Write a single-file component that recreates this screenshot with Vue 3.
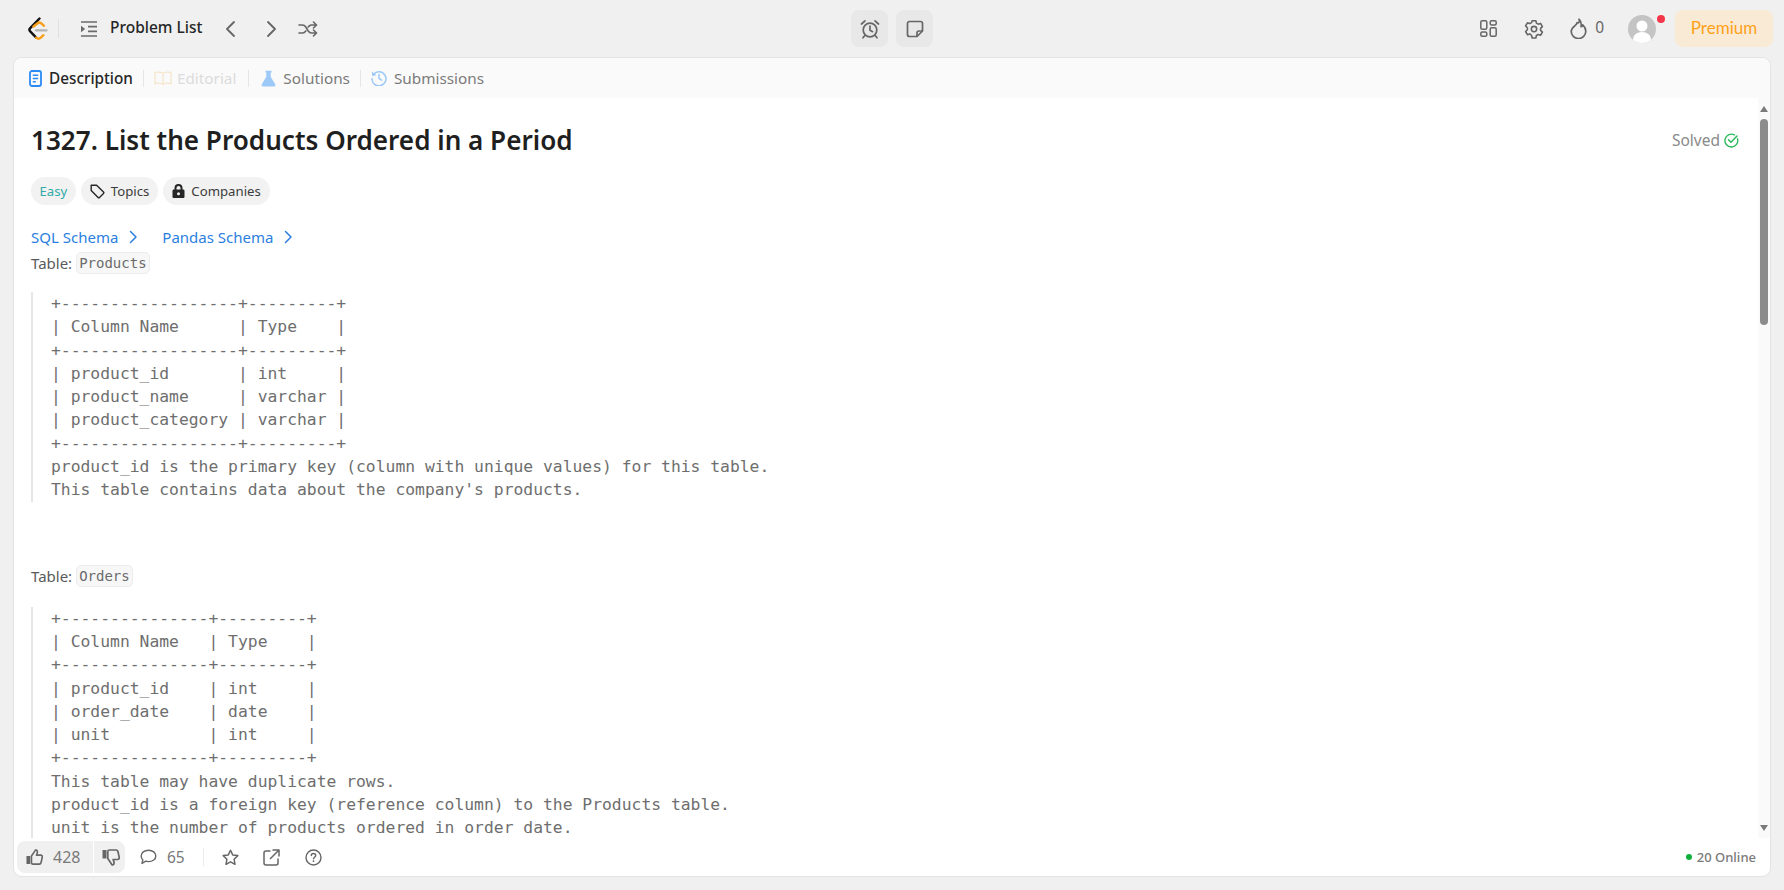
<script setup>
const table1 = `+------------------+---------+
| Column Name      | Type    |
+------------------+---------+
| product_id       | int     |
| product_name     | varchar |
| product_category | varchar |
+------------------+---------+
product_id is the primary key (column with unique values) for this table.
This table contains data about the company's products.`
const table2 = `+---------------+---------+
| Column Name   | Type    |
+---------------+---------+
| product_id    | int     |
| order_date    | date    |
| unit          | int     |
+---------------+---------+
This table may have duplicate rows.
product_id is a foreign key (reference column) to the Products table.
unit is the number of products ordered in order date.`
</script>

<template>
  <div class="page">
    <header class="topbar">
      <div class="side left">
        <svg class="logo" width="20" height="24" viewBox="0 0 20 24" fill="none">
          <path d="M11.5 1.5 2.2 11.2c-1 1-1 2.2 0 3.2l6 6.2" stroke="#111" stroke-width="2.4" stroke-linecap="round"/>
          <path d="M5.5 9.5 9.6 6.2c1-.8 2.4-.8 3.4 0l3 2.6" stroke="#f89f1b" stroke-width="2.4" stroke-linecap="round"/>
          <path d="M8.2 20.6c1.4 1.3 3.2 1.3 4.6 0l2.6-2.4" stroke="#f89f1b" stroke-width="2.4" stroke-linecap="round"/>
          <path d="M8 13.4h10.5" stroke="#b3b3b3" stroke-width="2.2" stroke-linecap="round"/>
        </svg>
        <span class="vsep"></span>
        <svg class="list-ic" width="18" height="16" viewBox="0 0 18 16" fill="none">
          <path d="M1 1h16M8 5.7h9M8 10.3h9M1 15h16" stroke="#6b6b6b" stroke-width="1.7"/>
          <path d="M1 4.8 5.2 8 1 11.2z" fill="#6b6b6b"/>
        </svg>
        <span class="plist">Problem List</span>
        <svg class="nav a" width="12" height="18" viewBox="0 0 12 18" fill="none"><path d="M10 2 3 9l7 7" stroke="#666" stroke-width="1.8" stroke-linecap="round" stroke-linejoin="round"/></svg>
        <svg class="nav b" width="12" height="18" viewBox="0 0 12 18" fill="none"><path d="m2 2 7 7-7 7" stroke="#666" stroke-width="1.8" stroke-linecap="round" stroke-linejoin="round"/></svg>
        <svg class="nav c" width="20" height="16" viewBox="0 0 20 16" fill="none"><path d="M1 4h3.500c1.500 0 2.500.8 3.300 2l2.400 4c.8 1.200 1.800 2 3.300 2H18M1 12h3.500c1.500 0 2.500-.8 3.300-2M10.200 6c.8-1.200 1.800-2 3.300-2H18M15.500 1 18.500 4l-3 3M15.500 9l3 3-3 3" stroke="#666" stroke-width="1.600" stroke-linecap="round" stroke-linejoin="round"/></svg>
      </div>
      <div class="center">
        <button class="sq">
          <svg width="20" height="20" viewBox="0 0 20 20" fill="none"><circle cx="10" cy="11" r="6.800" stroke="#666" stroke-width="1.700"/><path d="M10 7v4.200l2.600 1.500M1.500 5 5 1.800M18.500 5 15 1.800M4.800 16.500 3 18.800M15.200 16.500l1.800 2.300" stroke="#666" stroke-width="1.700" stroke-linecap="round"/></svg>
        </button>
        <button class="sq">
          <svg width="18" height="18" viewBox="0 0 18 18" fill="none"><path d="M3.500 1.500h11a2 2 0 0 1 2 2V11l-5.500 5.500H3.500a2 2 0 0 1-2-2v-11a2 2 0 0 1 2-2z" stroke="#666" stroke-width="1.700" stroke-linejoin="round"/><path d="M16.500 11H13a2 2 0 0 0-2 2v3.500" stroke="#666" stroke-width="1.700"/></svg>
        </button>
      </div>
      <div class="side right">
        <svg class="grid-ic" width="17" height="17" viewBox="0 0 17 17" fill="none" stroke="#666" stroke-width="1.500"><rect x=".8" y=".8" width="6" height="8.400" rx="1.500"/><rect x=".8" y="12" width="6" height="4.200" rx="1.500"/><rect x="10.200" y=".8" width="6" height="4.200" rx="1.500"/><rect x="10.200" y="7.800" width="6" height="8.400" rx="1.500"/></svg>
        <svg class="gear" width="20" height="20" viewBox="0 0 24 24" fill="none" stroke="#666" stroke-width="1.900" stroke-linejoin="round"><circle cx="12" cy="12" r="3.200"/><path d="M9.800 2h4.400l.7 3 2.100 1.200 2.900-.9 2.200 3.800-2.200 2.100v2.400l2.200 2.100-2.200 3.800-2.900-.9-2.100 1.200-.7 3H9.800l-.7-3L7 17.900l-2.900.9-2.200-3.800 2.200-2.100v-2.400L1.900 8.400l2.200-3.800 2.900.9 2.100-1.200z"/></svg>
        <svg class="flame" width="17" height="21" viewBox="0 0 17 21" fill="none"><path d="M9 1.200c1 2.800-.3 4.300-2 3.500C7.500 7 1.200 9 1.200 13.200a7.300 7.300 0 0 0 14.600 0c0-3.400-1.800-5.200-3-6.400-.3 1.400-1 1.900-1.700 1.900C11.500 6 11 3 9 1.200z" stroke="#666" stroke-width="1.700" stroke-linejoin="round"/></svg>
        <span class="zero">0</span>
        <span class="avatar">
          <svg width="28" height="28" viewBox="0 0 28 28"><defs><clipPath id="avclip"><circle cx="14" cy="14" r="14"/></clipPath></defs><circle cx="14" cy="14" r="14" fill="#c4c4c4"/><g clip-path="url(#avclip)"><circle cx="14" cy="11" r="5.500" fill="#fff"/><ellipse cx="14" cy="24" rx="9" ry="7" fill="#fff"/></g></svg>
          <i class="dot"></i>
        </span>
        <button class="premium">Premium</button>
      </div>
    </header>

    <main class="panel">
      <nav class="tabs">
        <span class="tab active">
          <svg width="13" height="17" viewBox="0 0 13 17" fill="none"><rect x="1" y="1" width="11" height="15" rx="2" stroke="#2a8af6" stroke-width="1.800"/><path d="M3.800 5.200h5.400M3.800 8.500h5.400M3.800 11.800h3" stroke="#2a8af6" stroke-width="1.400"/></svg>
          Description
        </span>
        <i class="tsep"></i>
        <span class="tab disabled">
          <svg width="18" height="14" viewBox="0 0 18 14" fill="none"><path d="M9 2.500C7.500 1 4 1 1 1.500v11c3-.5 6.500-.5 8 1 1.500-1.500 5-1.500 8-1v-11C14 1 10.500 1 9 2.500zM9 2.500v11" stroke="#f5e6cd" stroke-width="1.300"/></svg>
          Editorial
        </span>
        <i class="tsep wide"></i>
        <span class="tab">
          <svg width="15" height="17" viewBox="0 0 15 17"><path d="M4.500.8h6v1.700H9.700v4.300l4.500 7.400c.6 1.100 0 2.200-1.300 2.200H2.100C.8 16.400.2 15.300.8 14.200l4.500-7.400V2.500h-.8z" fill="#9cc9f7"/></svg>
          Solutions
        </span>
        <i class="tsep"></i>
        <span class="tab">
          <svg width="16" height="16" viewBox="0 0 16 16" fill="none"><path d="M2.500 4.500A7 7 0 1 1 1 8.500M8 4.500V8.500l2.600 1.600" stroke="#9cc9f7" stroke-width="1.500" stroke-linecap="round"/><path d="M.8 1.500 1.200 6l4.300-.8z" fill="#9cc9f7"/></svg>
          Submissions
        </span>
      </nav>

      <div class="body">
        <div class="content">
          <div class="title-row">
            <h1>1327. List the Products Ordered in a Period</h1>
            <span class="solved">Solved
              <svg width="15" height="15" viewBox="0 0 15 15" fill="none"><path d="M13.500 5.800A6.400 6.400 0 1 1 10.500 2" stroke="#2cbb5d" stroke-width="1.400" stroke-linecap="round"/><path d="m4.500 6.800 2.500 2.500 6-6.300" stroke="#2cbb5d" stroke-width="1.500" stroke-linecap="round" stroke-linejoin="round"/></svg>
            </span>
          </div>
          <div class="pills">
            <span class="pill easy">Easy</span>
            <span class="pill">
              <svg width="15" height="15" viewBox="0 0 15 15" fill="none"><path d="M1.200 1.200h5.400l6.900 6.900a1 1 0 0 1 0 1.400l-4 4a1 1 0 0 1-1.400 0L1.200 6.600z" stroke="#262626" stroke-width="1.400" stroke-linejoin="round"/></svg>
              Topics
            </span>
            <span class="pill">
              <svg width="13" height="14" viewBox="0 0 13 14"><path d="M2.500 5.500V4a4 4 0 0 1 8 0v1.500h.7c.7 0 1.300.6 1.300 1.300v5.900c0 .7-.6 1.300-1.300 1.300H1.800c-.7 0-1.300-.6-1.300-1.300V6.800c0-.7.600-1.300 1.300-1.300zm2 0h4V4a2 2 0 0 0-4 0z" fill="#262626"/><circle cx="6.500" cy="9.800" r="1.500" fill="#f2f2f2"/></svg>
              Companies
            </span>
          </div>
          <div class="links">
            <a>SQL Schema <svg width="9" height="14" viewBox="0 0 9 14" fill="none"><path d="m1.500 1.500 5.500 5.500-5.500 5.500" stroke="#2a7fe0" stroke-width="1.500" stroke-linecap="round" stroke-linejoin="round"/></svg></a>
            <a>Pandas Schema <svg width="9" height="14" viewBox="0 0 9 14" fill="none"><path d="m1.500 1.500 5.500 5.500-5.500 5.500" stroke="#2a7fe0" stroke-width="1.500" stroke-linecap="round" stroke-linejoin="round"/></svg></a>
          </div>
          <p class="para">Table: <code>Products</code></p>
          <pre class="block">{{ table1 }}</pre>
          <p class="para second">Table: <code>Orders</code></p>
          <pre class="block later">{{ table2 }}</pre>
        </div>
        <div class="scroll">
          <i class="arrow up"></i>
          <i class="thumb"></i>
          <i class="arrow down"></i>
        </div>
      </div>

      <footer class="bottom">
        <div class="votes">
          <span class="like">
            <svg width="17" height="18" viewBox="0 0 18 18" fill="none"><path d="M.5 8h4v8.500h-4z" fill="#666"/><path d="M5.800 8 9.500 2.500c.3-1.300 2.600-1.200 2.600 1 0 1.500-.6 2.500-1 3.500h4.400c1.300 0 2 1 1.700 2.200l-1.200 5.600c-.2 1-1 1.700-2 1.700H7.500c-1 0-1.700-.5-1.700-1.500z" stroke="#666" stroke-width="1.700" stroke-linejoin="round"/></svg>
            428
          </span>
          <span class="dislike">
            <svg width="18" height="18" viewBox="0 0 18 18" fill="none"><path d="M.5 2h4v8.500h-4z" fill="#666"/><path d="M5.800 10.500 9.500 16c.3 1.300 2.600 1.200 2.600-1 0-1.500-.6-2.500-1-3.500h4.400c1.300 0 2-1 1.700-2.200l-1.200-5.600c-.2-1-1-1.700-2-1.700H7.500c-1 0-1.700.5-1.700 1.500z" stroke="#666" stroke-width="1.700" stroke-linejoin="round"/></svg>
          </span>
        </div>
        <span class="comments">
          <svg width="17" height="16" viewBox="0 0 17 16" fill="none"><path d="M8.500 1.200c4.200 0 7.300 2.500 7.300 5.700s-3.100 5.700-7.300 5.700c-1 0-1.900-.1-2.700-.4L2 14.500l.8-3.500C1.800 9.900 1.200 8.500 1.200 6.900c0-3.200 3.100-5.700 7.300-5.700z" stroke="#666" stroke-width="1.400" stroke-linejoin="round"/></svg>
          65
        </span>
        <i class="bsep"></i>
        <svg class="b-ic star" width="17" height="17" viewBox="0 0 17 17" fill="none"><path d="m8.500 1.200 2.200 4.700 5.100.7-3.700 3.600.9 5.100-4.500-2.500L4 15.300l.9-5.100-3.700-3.600 5.100-.7z" stroke="#666" stroke-width="1.500" stroke-linejoin="round"/></svg>
        <svg class="b-ic share" width="17" height="17" viewBox="0 0 17 17" fill="none"><path d="M7 2H3a2 2 0 0 0-2 2v10a2 2 0 0 0 2 2h10a2 2 0 0 0 2-2v-4M10 1h6v6M16 1 7.500 9.500" stroke="#666" stroke-width="1.500" stroke-linecap="round" stroke-linejoin="round"/></svg>
        <svg class="b-ic help" width="17" height="17" viewBox="0 0 17 17" fill="none"><circle cx="8.500" cy="8.500" r="7.500" stroke="#666" stroke-width="1.400"/><path d="M6.300 6.600c0-1.300 1-2.100 2.200-2.100s2.200.8 2.200 2c0 1.700-2.200 1.700-2.200 3.300" stroke="#666" stroke-width="1.400" stroke-linecap="round"/><circle cx="8.500" cy="12.200" r=".9" fill="#666"/></svg>
        <span class="online"><i></i>20 Online</span>
      </footer>
    </main>
  </div>
</template>

<style>
html, body { margin: 0; background: #f0f0f0; overflow: hidden; }
</style>

<style scoped>
* { box-sizing: border-box; }
.page {
  width: 1784px;
  height: 890px;
  background: #f0f0f0;
  font-family: "Noto Sans", "Open Sans", sans-serif;
  color: #262626;
  display: flex;
  flex-direction: column;
  padding: 0 13px 13px;
}
.topbar {
  height: 57px;
  flex: none;
  display: grid;
  grid-template-columns: 1fr auto 1fr;
  align-items: center;
}
.side { display: flex; align-items: center; }
.left { padding-left: 15px; }
.vsep { width: 1px; height: 19px; background: #e0e0e0; margin: 0 21px 0 10px; }
.plist { font-size: 15.500px; font-weight: 500; color: #262626; margin: 0 21px 3px 12px; }
.nav.a { margin-right: 30px; }
.nav.b { margin-right: 20px; }
.center { display: flex; gap: 8px; }
.sq {
  width: 37px;
  height: 37px;
  border: 0;
  border-radius: 8px;
  background: #e8e8e8;
  display: flex;
  align-items: center;
  justify-content: center;
  padding: 0;
}
.right { justify-content: flex-end; margin-right: -2px; }
.grid-ic { margin-right: 27px; }
.gear { margin-right: 26px; }
.zero { font-size: 15.500px; color: #666; margin: 0 24px 3px 8px; }
.avatar { position: relative; display: flex; margin-right: 19px; }
.dot { position: absolute; top: 0; right: -9px; width: 8px; height: 8px; border-radius: 50%; background: #f5364a; }
.premium {
  width: 98px;
  height: 37px;
  border: 0;
  border-radius: 8px;
  background: #f9ead6;
  color: #ffa116;
  font-family: "Lato", "Noto Sans", sans-serif;
  font-size: 17px;
  padding: 0 0 3px;
}
.panel {
  flex: 1;
  min-height: 0;
  display: flex;
  flex-direction: column;
  background: #fff;
  border: 1px solid #e3e3e3;
  border-radius: 9px;
  overflow: hidden;
}
.tabs {
  height: 40px;
  flex: none;
  background: #fafafa;
  display: flex;
  align-items: center;
  padding-left: 15px;
  font-size: 15.300px;
  color: #7a7a7a;
}
.tab { display: flex; align-items: center; gap: 7px; }
.tab.active { color: #262626; font-weight: 500; }
.tab.disabled { color: #dcdcdc; gap: 5px; }
.tsep { width: 1px; height: 17px; background: #e6e6e6; margin: 0 10px; }
.tsep.wide { margin: 0 12px; }
.body { flex: 1; min-height: 0; display: flex; position: relative; }
.content { flex: 1; min-width: 0; overflow: hidden; padding: 0 31px 0 17px; }
.title-row { display: flex; justify-content: space-between; align-items: center; height: 40px; margin-top: 22px; }
h1 { margin: 0; font-size: 26.100px; font-weight: 600; color: #1f1f1f; }
.solved { display: flex; align-items: center; gap: 4px; font-size: 15.500px; color: #8a8a8a; }
.pills { display: flex; gap: 5px; margin-top: 17px; }
.pill {
  height: 28px;
  border-radius: 14px;
  background: #f2f2f2;
  display: flex;
  align-items: center;
  gap: 6px;
  padding: 0 9px;
  font-size: 13.200px;
  color: #3c3c3c;
}
.pill.easy { color: #30aaa8; padding: 0 8.500px; }
.links { display: flex; gap: 24px; margin-top: 20px; font-size: 15px; line-height: 24px; color: #2a7fe0; }
.links a { display: flex; align-items: center; gap: 11px; }
.para { margin: 2px 0 0; font-size: 15px; line-height: 24px; color: #5a5a5a; display: flex; align-items: center; gap: 4px; }
.para.second { margin-top: 62px; }
code {
  font-family: "DejaVu Sans Mono", monospace;
  font-size: 14px;
  color: #6b6b6b;
  background: #f7f7f7;
  border: 1px solid #ececec;
  border-radius: 5px;
  padding: 0 2px;
  line-height: 20px;
}
.block {
  margin: 17px 0 0;
  border-left: 2px solid #e6e6e6;
  padding: 0 0 0 18px;
  font-family: "DejaVu Sans Mono", monospace;
  font-size: 16.350px;
  line-height: 23.300px;
  color: #6e6e6e;
}
.block.later { margin-top: 19px; }
.scroll {
  position: absolute;
  top: 0;
  right: 0;
  bottom: 0;
  width: 12px;
  background: #fafafa;
  display: flex;
  flex-direction: column;
  align-items: center;
}
.thumb { width: 8px; height: 206px; margin-top: 7px; background: #8c8c8c; border-radius: 4px; }
.arrow { width: 0; height: 0; border-left: 4.500px solid transparent; border-right: 4.500px solid transparent; }
.arrow.up { border-bottom: 6px solid #7a7a7a; margin-top: 8px; }
.arrow.down { border-top: 6px solid #7a7a7a; margin-top: auto; margin-bottom: 7px; }
.bottom {
  height: 38px;
  flex: none;
  display: flex;
  align-items: center;
  padding-left: 3px;
  font-size: 15.500px;
  color: #7a7a7a;
}
.votes { display: flex; height: 32px; border-radius: 8px; overflow: hidden; gap: 1px; }
.like, .dislike { display: flex; align-items: center; background: #f0f0f0; }
.like { gap: 10px; padding: 0 9px; width: 76px; font-size: 16px; }
.dislike { padding: 0 0 0 8px; width: 31px; }
.dislike svg { flex: none; }
.comments { display: flex; align-items: center; gap: 10px; margin-left: 15px; }
.bsep { width: 1px; height: 18px; background: #ececec; margin: 0 18px; }
.b-ic { margin-right: 24.500px; }
.online { margin-left: auto; margin-right: 14px; display: flex; align-items: center; gap: 5px; font-size: 13px; font-weight: 500; color: #7a7a7a; }
.online i { width: 6px; height: 6px; border-radius: 50%; background: #0fb13b; }
</style>
